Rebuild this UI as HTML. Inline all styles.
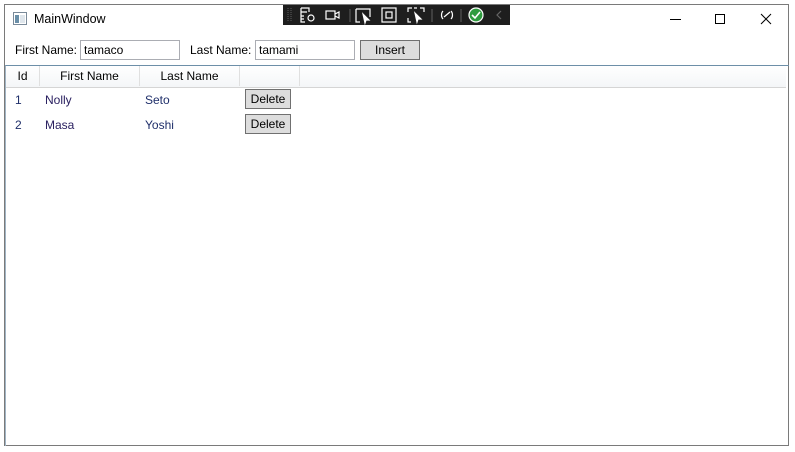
<!DOCTYPE html>
<html><head><style>
body{margin:0;width:795px;height:452px;background:#fff;position:relative;font-family:"Liberation Sans",sans-serif;font-size:12px;color:#000;overflow:hidden}
.a{position:absolute}
.win{left:4px;top:4px;width:785px;height:442px;border:1px solid #7a7a7a;box-sizing:border-box}
.tb{border:1px solid #abadb3;height:20px;box-sizing:border-box;padding:2px 3px;font-size:12px}
.btn{background:#dddddd;border:1px solid #707070;box-sizing:border-box;text-align:center;font-size:12px}
.cell{top:0;height:20px;line-height:20px;text-align:center;border-right:1px solid #e0e0e0;box-sizing:border-box}
</style></head><body>
<div class="a win"></div>
<svg class="a" style="left:13px;top:12px" width="14" height="13"><rect x="0.5" y="0.5" width="13" height="12" fill="#fff" stroke="#7a8a99"/><rect x="2" y="3" width="4" height="8" fill="#6a8fa8"/><rect x="7" y="3" width="5" height="8" fill="#dfe6ec"/></svg>
<div class="a" style="left:34px;top:12px;font-size:12.5px">MainWindow</div>
<div class="a" style="left:283px;top:5px;width:227px;height:20px;background:#1e1e1e"></div>
<svg class="a" style="left:283px;top:5px" width="227" height="20" fill="none" stroke="#fff" stroke-width="1.2">
<path d="M5 3v14M8 3v14" stroke="#555" stroke-dasharray="1 1"/>
<path d="M18 3h8v4M18 3v14h4M18 7h6M18 11h3M18 14h3"/><circle cx="28" cy="13" r="3"/>
<rect x="43" y="6" width="9" height="8"/><path d="M52 9l4-2v6l-4-2"/>
<path d="M67 4v13" stroke="#555"/>
<path d="M73 4h14v8M73 4v13h4"/><path d="M80 9l6 6-3 0 -1 3z" fill="#fff"/>
<rect x="99" y="3" width="14" height="14"/><rect x="103" y="7" width="6" height="6"/>
<path d="M125 7V3h4M137 3h4v4M125 13v4h3M131 3h3"/><path d="M132 8l6 6-3 0-1 3z" fill="#fff"/>
<path d="M149 4v13" stroke="#555"/>
<path d="M160 6c-2 2-2 6 0 8M168 6c2 2 2 6 0 8M161 12l6-5"/>
<path d="M178 4v13" stroke="#555"/>
<circle cx="193" cy="10" r="7" fill="#2e9b3e" stroke="#fff"/><path d="M189 10l3 3 5-6" stroke="#fff" stroke-width="1.6"/>
<path d="M218 6l-4 4 4 4" stroke="#666"/>
</svg>
<svg class="a" style="left:665px;top:12px" width="110" height="14" stroke="#000" fill="none" stroke-width="1"><path d="M5 7.5h11"/><rect x="50.5" y="2.5" width="9" height="9"/><path d="M96 2l10 10M106 2l-10 10"/></svg>
<div class="a" style="left:15px;top:43px">First Name:</div>
<div class="a tb" style="left:80px;top:40px;width:100px">tamaco</div>
<div class="a" style="left:190px;top:43px">Last Name:</div>
<div class="a tb" style="left:255px;top:40px;width:100px">tamami</div>
<div class="a btn" style="left:360px;top:40px;width:60px;height:20px;line-height:18px">Insert</div>
<div class="a" style="left:5px;top:65px;width:784px;height:381px;border-top:1px solid #6d8fa8;border-left:1px solid #a0b4c4;box-sizing:border-box">
 <div class="a" style="left:0;top:0;width:780px;height:21px;background:linear-gradient(#fff,#f4f6f8);border-bottom:1px solid #d5d5d5">
  <div class="a cell" style="left:0;width:34px">Id</div>
  <div class="a cell" style="left:34px;width:100px">First Name</div>
  <div class="a cell" style="left:134px;width:100px">Last Name</div>
  <div class="a cell" style="left:234px;width:60px"></div>
 </div>
 <div class="a" style="left:9px;top:27px;color:#1f2f6a">1</div>
 <div class="a" style="left:39px;top:27px;color:#2a2060">Nolly</div>
 <div class="a" style="left:139px;top:27px;color:#1f2f6a">Seto</div>
 <div class="a btn" style="left:239px;top:23px;width:46px;height:20px;line-height:18px">Delete</div>
 <div class="a" style="left:9px;top:52px;color:#1f2f6a">2</div>
 <div class="a" style="left:39px;top:52px;color:#2a2060">Masa</div>
 <div class="a" style="left:139px;top:52px;color:#1f2f6a">Yoshi</div>
 <div class="a btn" style="left:239px;top:48px;width:46px;height:20px;line-height:18px">Delete</div>
</div>
</body></html>
